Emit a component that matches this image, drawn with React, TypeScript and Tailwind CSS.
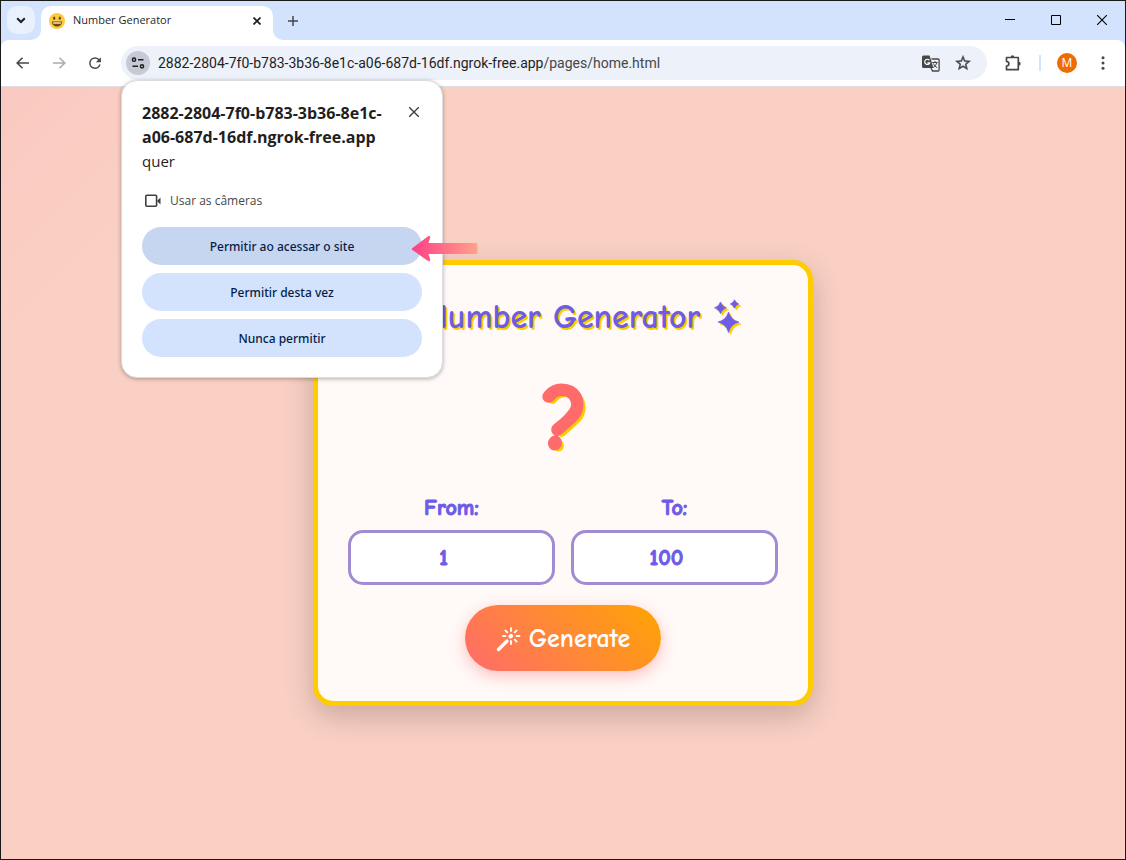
import React from 'react';

const ui = "font-['Open_Sans','Noto_Sans',sans-serif]";

function SmileIcon() {
  return (
    <svg width="16" height="16" viewBox="0 0 16 16" aria-hidden="true">
      <circle cx="8" cy="8" r="8" fill="#ffc83d" />
      <ellipse cx="5.2" cy="5.2" rx="1.1" ry="1.6" fill="#5b4a1e" />
      <ellipse cx="10.8" cy="5.2" rx="1.1" ry="1.6" fill="#5b4a1e" />
      <path d="M3 8.5h10c0 3-2.2 5-5 5s-5-2-5-5z" fill="#6b4a12" />
      <path d="M4.2 9.3h7.6v1.4H4.2z" fill="#fff3c8" />
    </svg>
  );
}

function TabStrip() {
  return (
    <div className="flex h-[39px] bg-[#d3e3fd]">
      <button aria-label="Search tabs" className="ml-1.5 mt-[5px] flex size-7 items-center justify-center rounded-[10px] bg-[#e9f1fe]">
        <svg width="10" height="7" viewBox="0 0 10 7" fill="none" stroke="#1f1f1f" strokeWidth="2"><path d="M1.2 1.2 5 5l3.8-3.8" /></svg>
      </button>
      <div className="relative ml-1.5 mt-[5px] flex w-[232px] items-center rounded-t-[10px] bg-white pb-[5px] pl-2 pr-2">
        <svg className="absolute -left-2.5 bottom-0" width="10" height="10" viewBox="0 0 10 10"><path d="M10 0v10H0A10 10 0 0 0 10 0z" fill="#fff" /></svg>
        <svg className="absolute -right-2.5 bottom-0" width="10" height="10" viewBox="0 0 10 10"><path d="M0 0v10h10A10 10 0 0 1 0 0z" fill="#fff" /></svg>
        <SmileIcon />
        <span className="ml-2 flex-1 text-[11px] text-[#1f1f1f]">Number Generator</span>
        <button aria-label="Close tab" className="flex size-4 items-center justify-center">
          <svg width="8" height="8" viewBox="0 0 8 8" fill="none" stroke="#1f1f1f" strokeWidth="1.7"><path d="m.5.5 7 7m0-7-7 7" /></svg>
        </button>
      </div>
      <button aria-label="New tab" className="ml-3.5 mt-[14px] flex h-3 w-3 items-center justify-center">
        <svg width="10" height="10" viewBox="0 0 10 10" stroke="#474747" strokeWidth="1.5"><path d="M5 0v10M0 5h10" /></svg>
      </button>
      <div className="ml-auto flex h-[38px]">
        <button aria-label="Minimize" className="flex w-[46px] items-center justify-center">
          <svg width="10" height="10" viewBox="0 0 10 10" stroke="#000"><path d="M0 4.5h10" /></svg>
        </button>
        <button aria-label="Maximize" className="flex w-[46px] items-center justify-center">
          <svg width="10" height="10" viewBox="0 0 10 10" fill="none" stroke="#000"><path d="M.5.5h9v9h-9z" /></svg>
        </button>
        <button aria-label="Close" className="flex w-[46px] items-center justify-center">
          <svg width="10" height="10" viewBox="0 0 10 10" fill="none" stroke="#000" strokeWidth="1.1"><path d="m0 0 10 10m0-10L0 10" /></svg>
        </button>
      </div>
    </div>
  );
}

function Toolbar() {
  return (
    <div className="bg-[#d3e3fd]">
      <div className="flex h-[47px] items-center rounded-t-lg border-b border-[#dcdfe3] bg-white px-3">
        <button aria-label="Back" className="flex size-5 items-center justify-center">
          <svg width="14" height="12" viewBox="0 0 14 12" fill="none" stroke="#474747" strokeWidth="1.6"><path d="M13 6H1.5M6.500.7 1.200 6l5.300 5.300" /></svg>
        </button>
        <button aria-label="Forward" className="ml-4 flex size-5 items-center justify-center">
          <svg width="14" height="12" viewBox="0 0 14 12" fill="none" stroke="#a9abae" strokeWidth="1.6"><path d="M1 6h11.500M7.500.7 12.800 6l-5.300 5.300" /></svg>
        </button>
        <button aria-label="Reload" className="ml-4 flex size-5 items-center justify-center">
          <svg width="20" height="20" viewBox="0 0 24 24" fill="#474747"><path d="M17.650 6.350A7.960 7.960 0 0 0 12 4a8 8 0 1 0 7.730 10h-2.080A6 6 0 1 1 12 6c1.660 0 3.140.69 4.220 1.780L13 11h7V4z" transform="translate(1.500 1.500) scale(.88)" /></svg>
        </button>
        <div className="ml-4 flex h-[34px] flex-1 items-center rounded-full bg-[#ecf1fa] pl-[5px] pr-3.5">
          <button aria-label="Site information" className="flex size-6 shrink-0 items-center justify-center rounded-full bg-[#c5cad5]">
            <svg width="14" height="12" viewBox="0 0 14 12" fill="none" stroke="#1f1f1f" strokeWidth="1.5"><circle cx="3" cy="2.7" r="1.6" /><path d="M7 2.700H12.500M1.500 9.300h5.500" /><circle cx="11" cy="9.3" r="1.6" /></svg>
          </button>
          <span className="ml-2 flex-1 whitespace-nowrap font-[Roboto,sans-serif] text-sm text-[#1f1f1f]">2882-2804-7f0-b783-3b36-8e1c-a06-687d-16df.ngrok-free.app<span className="text-[#474747]">/pages/home.html</span></span>
          <button aria-label="Translate" className="flex size-5 items-center justify-center">
            <svg width="18" height="17" viewBox="0 0 18 17"><path d="M1.500.5h6l1.300 3.800 2.600 8.700H1.500A1.500 1.500 0 0 1 0 11.500V2A1.500 1.500 0 0 1 1.500.5z" fill="#474747" /><path d="M7.400 5.300a2.600 2.600 0 1 0 .3 2.600H5.400" fill="none" stroke="#fff" strokeWidth="1.2" /><path d="M9.500 4h6.600c.6 0 1 .4 1 1v10c0 .6-.4 1-1 1h-5.600L9 13" fill="none" stroke="#474747" strokeWidth="1.3" /><path d="M10.200 7.500h5.500M13 6v1.500M14.700 7.500c-.3 2.200-1.800 4-3.500 5M11.500 8.500c.6 2 2 3.300 3.600 4.200" fill="none" stroke="#474747" strokeWidth="1" /></svg>
          </button>
          <button aria-label="Bookmark" className="ml-3 flex size-5 items-center justify-center">
            <svg width="18" height="18" viewBox="0 0 24 24" fill="#474747" stroke="#474747" strokeWidth=".6"><path d="m22 9.240-7.190-.62L12 2 9.190 8.630 2 9.240l5.460 4.730L5.820 21 12 17.270 18.180 21l-1.630-7.030zM12 15.400l-3.760 2.270 1-4.280-3.320-2.880 4.380-.38L12 6.100l1.710 4.040 4.380.38-3.320 2.880 1 4.280z" /></svg>
          </button>
        </div>
        <button aria-label="Extensions" className="ml-4 flex size-5 items-center justify-center">
          <svg width="18" height="18" viewBox="0 0 18 18"><path d="M2.500 3.500h11.800v12.200H2.500v-3.600q2.400-.3 2.400-2.300T2.500 7.400z" fill="none" stroke="#474747" strokeWidth="1.7" strokeLinejoin="round" /><path d="M6.700 3a1.800 1.800 0 0 1 3.600 0zM14.800 7.800a1.900 1.900 0 0 1 0 3.800z" fill="#474747" /></svg>
        </button>
        <span className="ml-4 h-4 w-0.5 bg-[#d3e3fd]" />
        <button aria-label="Profile" className="ml-4 flex size-5 items-center justify-center rounded-full bg-[#ef6c00] text-xs text-white">M</button>
        <button aria-label="Menu" className="ml-4 flex size-5 items-center justify-center">
          <svg width="4" height="14" viewBox="0 0 4 14" fill="#474747"><circle cx="2" cy="1.7" r="1.5" /><circle cx="2" cy="7" r="1.5" /><circle cx="2" cy="12.3" r="1.5" /></svg>
        </button>
      </div>
    </div>
  );
}

function PermissionDialog() {
  return (
    <section role="dialog" aria-label="Camera permission" className="absolute left-[120px] top-[79px] w-[322px] rounded-2xl border border-[#dadce0] bg-white p-5 shadow-[0_1px_4px_rgba(0,0,0,0.3)]">
      <div className="flex items-start justify-between">
        <p className="w-[252px] whitespace-nowrap text-[15px] leading-6 text-[#1f1f1f]">
          <b className="text-base leading-6">2882-2804-7f0-b783-3b36-8e1c-<br />a06-687d-16df.ngrok-free.app</b><br />quer
        </p>
        <button aria-label="Dismiss" className="mt-[3px] flex size-4 items-center justify-center">
          <svg width="10" height="10" viewBox="0 0 10 10" fill="none" stroke="#3c4043" strokeWidth="1.4"><path d="m0 0 10 10m0-10L0 10" /></svg>
        </button>
      </div>
      <div className="mb-4 mt-[18px] flex h-5 items-center gap-2 pl-[3px] text-xs text-[#474747]">
        <svg width="17" height="14" viewBox="0 0 17 14" aria-hidden="true"><rect x=".8" y="1.3" width="10.8" height="11" rx="1" fill="none" stroke="#3c4043" strokeWidth="1.6" /><path d="M12 7l3.500-3.500v7z" fill="#3c4043" /></svg>
        Usar as câmeras
      </div>
      <div className="flex flex-col gap-2 font-['Noto_Sans',sans-serif] text-xs font-medium text-[#041e49]">
        <button className="h-[38px] rounded-full bg-[#c7d6f0] pt-0.5">Permitir ao acessar o site</button>
        <button className="h-[38px] rounded-full bg-[#d3e3fd] pt-0.5">Permitir desta vez</button>
        <button className="h-[38px] rounded-full bg-[#d3e3fd] pt-0.5">Nunca permitir</button>
      </div>
      <svg className="absolute left-[288px] top-[154px]" width="68" height="28" viewBox="0 0 68 28" aria-hidden="true">
        <defs><linearGradient id="arrow"><stop offset="0" stopColor="#ff3f86" /><stop offset="1" stopColor="#ffa28c" /></linearGradient></defs>
        <path d="M2.500 13 18 1.300c1.500-1 2.600 0 2.200 1.500L18.500 8H66a1.500 1.500 0 0 1 1.500 1.500v8A1.500 1.500 0 0 1 66 19H18.500l1.700 5.300c.4 1.600-.9 2.600-2.200 1.600L2.500 15q-1.500-1 0-2z" fill="url(#arrow)" />
      </svg>
    </section>
  );
}

function Sparkles() {
  return (
    <svg width="32" height="36" viewBox="0 0 32 36" className="shrink-0" aria-hidden="true">
      <defs>
        <g id="stars">
          <path d="M14.500 13q2.300 8 10.500 10-8.200 2-10.500 10.500-2.300-8.500-10.500-10.500 8.200-2 10.500-10zM6.500 3q1.500 4.500 6 5.800-4.500 1.300-6 5.800-1.500-4.500-6-5.800 4.500-1.300 6-5.800zM20.500.8q1 3.300 4.200 4.200-3.200.9-4.200 4.200-1-3.300-4.200-4.200 3.200-.9 4.200-4.200z" stroke="currentColor" strokeWidth=".7" />
        </g>
      </defs>
      <use href="#stars" x="2" y="2" className="text-[#fc0]" fill="#fc0" />
      <use href="#stars" className="text-[#6c5ce7]" fill="#6c5ce7" />
    </svg>
  );
}

function NumberField({ id, label, value }: { id: string; label: string; value: number }) {
  return (
    <div className="flex min-w-0 flex-1 flex-col items-center gap-2">
      <label htmlFor={id} className="text-[22px] font-bold leading-7 [-webkit-text-stroke:1px_#6c5ce7]">{label}</label>
      <input id={id} type="text" inputMode="numeric" defaultValue={value} className="h-[55px] w-full rounded-[15px] border-3 border-[#a18cd1] bg-white pl-3 pr-7 text-center text-[22px] font-bold outline-none [-webkit-text-stroke:1px_#6c5ce7]" />
    </div>
  );
}

function GeneratorCard() {
  return (
    <section className="w-full max-w-[500px] rounded-[20px] border-5 border-[#fc0] bg-[#fff9f7] p-[30px] font-['Comic_Sans_MS','Comic_Neue',Lato,sans-serif] text-[#6c5ce7] shadow-[0_10px_30px_rgba(0,0,0,0.2)]">
      <h1 className="flex items-center justify-center gap-3.5 whitespace-nowrap pt-0.5 text-[34px] font-bold leading-10 [text-shadow:2px_2px_0_#fc0]">
        <Sparkles />
        Number Generator
        <Sparkles />
      </h1>
      <div className="mt-[38px] flex h-[87px] items-center justify-center pl-1 text-[90px] font-black leading-none text-[#ff6b6b] [-webkit-text-stroke:4px_#ff6b6b] [text-shadow:4px_3px_0_#fc0]">?</div>
      <div className="mt-8 flex gap-4">
        <NumberField id="from" label="From:" value={1} />
        <NumberField id="to" label="To:" value={100} />
      </div>
      <button className="mx-auto mt-5 flex h-[66px] items-center gap-2 rounded-full bg-[linear-gradient(45deg,#ff6b6b,#ffa502)] px-[31px] pt-0.5 text-[26px] font-bold text-white shadow-[0_5px_15px_rgba(255,107,107,0.4)]">
        <svg width="25" height="26" viewBox="0 0 25 26" fill="none" stroke="#fff" strokeLinecap="round" aria-hidden="true"><path d="m2.500 23.500 8.500-8.500" strokeWidth="3.4" /><path d="m14.500 10.500.6-.6" strokeWidth="4" /><path d="M15 2v3M15 15v3M7 10h2.500M20.500 10h3M9.500 4.500l1.800 1.800M20.500 4.500l-1.800 1.800M20.500 15.500l-1.800-1.800" strokeWidth="1.8" /></svg>
        Generate
      </button>
    </section>
  );
}

export default function App() {
  return (
    <div className={`relative flex min-h-screen flex-col border border-[#1a1a1a] ${ui}`}>
      <TabStrip />
      <Toolbar />
      <main className="flex flex-1 items-center justify-center bg-[linear-gradient(135deg,#fac9c1,#fad0c4_15%)] pt-5">
        <GeneratorCard />
      </main>
      <PermissionDialog />
    </div>
  );
}
